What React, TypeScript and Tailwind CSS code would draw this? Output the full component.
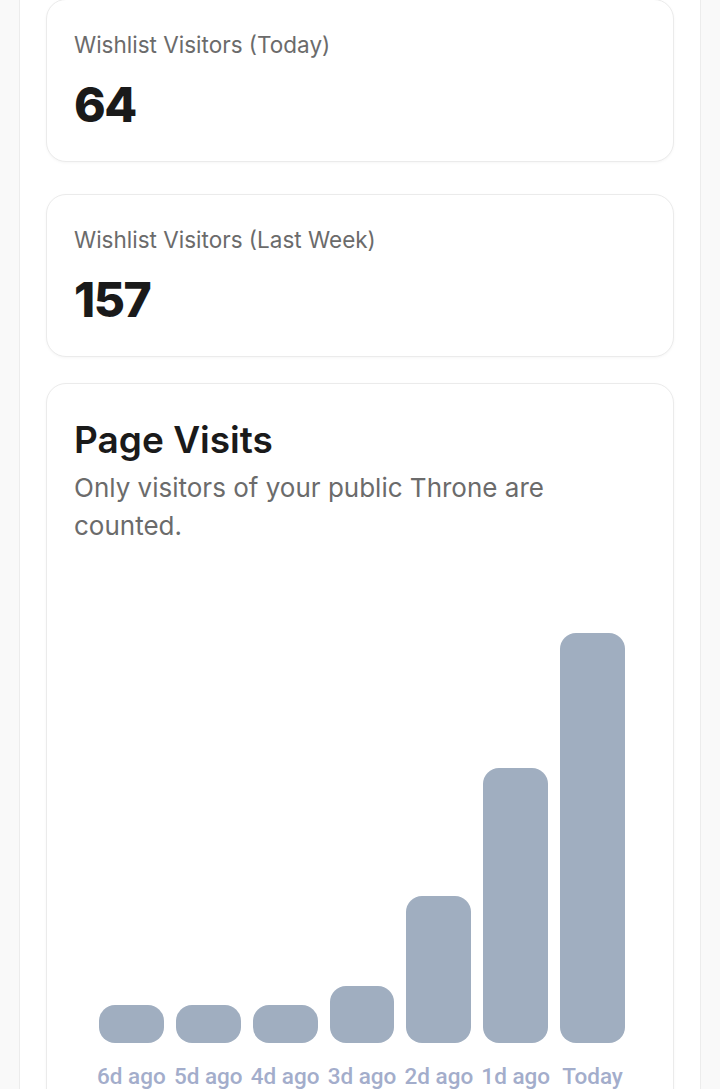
const STATS = [
  { label: "Wishlist Visitors (Today)", value: "64" },
  { label: "Wishlist Visitors (Last Week)", value: "157" },
];

const VISITS = [
  { label: "6d ago", height: 38 },
  { label: "5d ago", height: 38 },
  { label: "4d ago", height: 38 },
  { label: "3d ago", height: 57 },
  { label: "2d ago", height: 147 },
  { label: "1d ago", height: 275 },
  { label: "Today", height: 410 },
];

function StatCard({ label, value, className }: { label: string; value: string; className?: string }) {
  return (
    <div className={"rounded-[20px] border border-[#ebebeb] bg-white px-[27px] pt-[31px] pb-[32px] shadow-[0_1px_3px_rgba(0,0,0,0.04)] " + (className ?? "")}>
      <p className="text-[22.5px] leading-7 text-[#6b6b6b]">{label}</p>
      <p className="mt-[22px] text-[48px] font-extrabold leading-[48px] tracking-[-1.5px] text-[#1a1a1a]">{value}</p>
    </div>
  );
}

export default function App() {
  return (
    <div className="min-h-screen overflow-hidden bg-[#f9f9f9] font-['Inter',sans-serif]">
      <div className="mx-auto min-h-screen w-[682px] border-x border-[#ececec] bg-white px-[26px]">
        <StatCard label={STATS[0].label} value={STATS[0].value} className="-mt-px" />
        <StatCard label={STATS[1].label} value={STATS[1].value} className="mt-[32px]" />

        <div className="mt-[26px] rounded-[20px] border border-[#ebebeb] bg-white px-[27px] pt-[36px] pb-10 shadow-[0_1px_3px_rgba(0,0,0,0.04)]">
          <h2 className="text-[37px] font-semibold leading-10 text-[#1a1a1a]">Page Visits</h2>
          <p className="mt-[9px] text-[26px] leading-[38px] text-[#6b6b6b]">
            Only visitors of your public Throne are counted.
          </p>

          <div className="ml-[25px] mr-[21px]">
            <div className="grid h-[498px] grid-cols-7 items-end gap-3">
              {VISITS.map((v) => (
                <div key={v.label} className="rounded-2xl bg-[#a0aec0]" style={{ height: v.height }} />
              ))}
            </div>
            <div className="mt-[21px] grid grid-cols-7 gap-3">
              {VISITS.map((v) => (
                <div key={v.label} className="flex justify-center">
                  <span className="whitespace-nowrap font-['Roboto',sans-serif] text-[22.5px] font-medium leading-6 text-[#a3adcb]">{v.label}</span>
                </div>
              ))}
            </div>
          </div>
        </div>
      </div>
    </div>
  );
}
